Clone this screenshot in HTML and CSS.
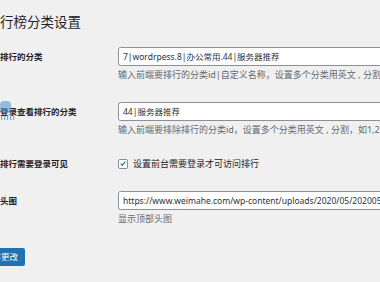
FILE: index.html
```html
<!DOCTYPE html>
<html lang="zh">
<head>
<meta charset="utf-8">
<link rel="stylesheet" href="styles.css">
</head>
<body>
<div class="wrap">
  <h1 class="title">排行榜分类设置</h1>
  <div class="form">
    <div class="row">
      <div class="label">需排行的分类</div>
      <div class="field">
        <div class="input">7|wordrpess.8|办公常用.44|服务器推荐</div>
        <p class="desc">输入前端要排行的分类id|自定义名称，设置多个分类用英文 , 分割，如1|分类名称</p>
      </div>
    </div>
    <div class="row">
      <div class="label">需登录查看排行的分类</div>
      <div class="field">
        <div class="input">44|服务器推荐</div>
        <p class="desc">输入前端要排除排行的分类id，设置多个分类用英文 , 分割，如1,2,3</p>
      </div>
    </div>
    <div class="row row-check">
      <div class="label">仅排行需要登录可见</div>
      <div class="field check">
        <span class="box"><svg viewBox="0 0 10 10" width="10" height="10"><path d="M2.2 5.2 L4.2 7.2 L7.9 2.6" fill="none" stroke="#2271b1" stroke-width="1.5"/></svg></span>
        <span class="check-text">设置前台需要登录才可访问排行</span>
      </div>
    </div>
    <div class="row">
      <div class="label">页头图</div>
      <div class="field">
        <div class="input">https://www.weimahe.com/wp-content/uploads/2020/05/20200520123456.jpg</div>
        <p class="desc">显示顶部头图</p>
      </div>
    </div>
  </div>
  <div class="submit"><span class="button">保存更改</span></div>
</div>
<div class="overlay">
  <svg viewBox="0 0 16 22" width="16" height="22">
    <rect x="0" y="1" width="11" height="12" rx="4" fill="#4a8fd0" opacity="0.55"/>
    <g fill="#4a8fd0" opacity="0.75">
      <rect x="1" y="16" width="1.2" height="4"/>
      <rect x="4" y="16" width="1.2" height="4"/>
      <rect x="7" y="16" width="1.2" height="4"/>
      <rect x="10" y="16" width="1.2" height="4"/>
      <rect x="13" y="16" width="1.2" height="4"/>
    </g>
  </svg>
</div>
</body>
</html>
```
FILE: styles.css
```css
html, body {
  margin: 0;
  padding: 0;
  background: #f0f0f1;
  overflow: hidden;
}
body {
  width: 380px;
  height: 282px;
  position: relative;
  font-family: "Noto Sans", "Noto Sans CJK SC", sans-serif;
  color: #1d2327;
}
.wrap {
  margin-left: -8.5px;
  padding-top: 13px;
  width: 420px;
}
.title {
  margin: 0 0 16px -5px;
  font-size: 13.5px;
  line-height: 18px;
  font-weight: 400;
  white-space: nowrap;
}
.form {
  display: flex;
  flex-direction: column;
  gap: 21px;
}
.row {
  display: grid;
  grid-template-columns: 126.5px 1fr;
  align-items: start;
}
.label {
  font-size: 8.5px;
  font-weight: 700;
  line-height: 19px;
  white-space: nowrap;
  overflow: hidden;
}
.field {
  min-width: 0;
}
.input {
  box-sizing: border-box;
  height: 19px;
  width: 290px;
  background: #fff;
  border: 1px solid #8c8f94;
  border-radius: 2.5px;
  padding: 0 4px;
  font-size: 8.5px;
  line-height: 17px;
  color: #2c3338;
  white-space: nowrap;
  overflow: hidden;
}
.desc {
  margin: 3px 0 0;
  font-size: 9px;
  line-height: 12px;
  color: #646970;
  white-space: nowrap;
}
.row-check {
  align-items: center;
}
.row-check .label {
  line-height: 13px;
}
.check {
  display: flex;
  align-items: center;
  gap: 5px;
  height: 13px;
}
.box {
  box-sizing: border-box;
  width: 10px;
  height: 10px;
  border: 1px solid #8c8f94;
  border-radius: 2px;
  background: #fff;
  display: flex;
  align-items: center;
  justify-content: center;
}
.box svg {
  display: block;
  width: 9px;
  height: 9px;
}
.check-text {
  font-size: 9px;
  line-height: 12px;
  color: #1d2327;
  white-space: nowrap;
}
.submit {
  display: flex;
  margin-top: 23px;
  margin-left: -14.5px;
}
.button {
  display: block;
  height: 18px;
  line-height: 18px;
  padding: 0 7px;
  background: #2271b1;
  color: #fff;
  border-radius: 2px;
  font-size: 8.5px;
}
.overlay {
  position: absolute;
  left: 0;
  top: 100px;
  width: 16px;
  height: 22px;
}
.overlay svg {
  display: block;
}
```
